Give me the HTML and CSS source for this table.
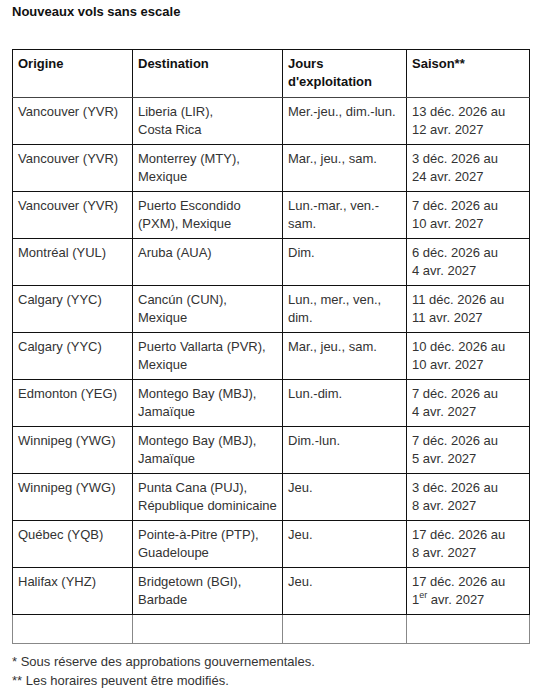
FILE: index.html
```html
<!DOCTYPE html>
<html lang="fr">
<head>
<meta charset="utf-8">
<title>Nouveaux vols sans escale</title>
<link rel="stylesheet" href="styles.css">
</head>
<body>
<h2 class="title">Nouveaux vols sans escale</h2>
<table class="flights">
  <colgroup>
    <col class="c1"><col class="c2"><col class="c3"><col class="c4">
  </colgroup>
  <thead>
    <tr><th>Origine</th><th>Destination</th><th>Jours d'exploitation</th><th>Saison**</th></tr>
  </thead>
  <tbody>
    <tr><td>Vancouver (YVR)</td><td>Liberia (LIR),<br>Costa Rica</td><td>Mer.-jeu., dim.-lun.</td><td>13 déc. 2026 au<br>12 avr. 2027</td></tr>
    <tr><td>Vancouver (YVR)</td><td>Monterrey (MTY),<br>Mexique</td><td>Mar., jeu., sam.</td><td>3 déc. 2026 au<br>24 avr. 2027</td></tr>
    <tr><td>Vancouver (YVR)</td><td>Puerto Escondido (PXM), Mexique</td><td>Lun.-mar., ven.-sam.</td><td>7 déc. 2026 au<br>10 avr. 2027</td></tr>
    <tr><td>Montréal (YUL)</td><td>Aruba (AUA)</td><td>Dim.</td><td>6 déc. 2026 au<br>4 avr. 2027</td></tr>
    <tr><td>Calgary (YYC)</td><td>Cancún (CUN),<br>Mexique</td><td>Lun., mer., ven., dim.</td><td>11 déc. 2026 au<br>11 avr. 2027</td></tr>
    <tr><td>Calgary (YYC)</td><td>Puerto Vallarta (PVR), Mexique</td><td>Mar., jeu., sam.</td><td>10 déc. 2026 au<br>10 avr. 2027</td></tr>
    <tr><td>Edmonton (YEG)</td><td>Montego Bay (MBJ), Jamaïque</td><td>Lun.-dim.</td><td>7 déc. 2026 au<br>4 avr. 2027</td></tr>
    <tr><td>Winnipeg (YWG)</td><td>Montego Bay (MBJ), Jamaïque</td><td>Dim.-lun.</td><td>7 déc. 2026 au<br>5 avr. 2027</td></tr>
    <tr><td>Winnipeg (YWG)</td><td>Punta Cana (PUJ), République dominicaine</td><td>Jeu.</td><td>3 déc. 2026 au<br>8 avr. 2027</td></tr>
    <tr><td>Québec (YQB)</td><td>Pointe-à-Pitre (PTP), Guadeloupe</td><td>Jeu.</td><td>17 déc. 2026 au<br>8 avr. 2027</td></tr>
    <tr><td>Halifax (YHZ)</td><td>Bridgetown (BGI),<br>Barbade</td><td>Jeu.</td><td>17 déc. 2026 au<br>1<sup>er</sup> avr. 2027</td></tr>
    <tr class="empty"><td>&nbsp;</td><td>&nbsp;</td><td>&nbsp;</td><td>&nbsp;</td></tr>
  </tbody>
</table>
<div class="notes">
  <p>* Sous réserve des approbations gouvernementales.</p>
  <p>** Les horaires peuvent être modifiés.</p>
</div>
</body>
</html>
```

FILE: styles.css
```css
html, body {
  margin: 0;
  padding: 0;
  background: #fff;
}
body {
  padding: 3px 12px 0 12px;
  font-family: "Liberation Sans", Arial, sans-serif;
  font-size: 13px;
  line-height: 18px;
  color: #333;
}
.title {
  margin: 0 0 28px 0;
  font-size: 13px;
  line-height: 18px;
  font-weight: bold;
  color: #111;
}
.flights {
  border-collapse: collapse;
  table-layout: fixed;
  width: 517px;
}
.c1 { width: 120px; }
.c2 { width: 150px; }
.c3 { width: 124px; }
.c4 { width: 123px; }
.flights th,
.flights td {
  border: 1px solid #111;
  padding: 5px 5px 5px 5px;
  text-align: left;
  vertical-align: top;
  font-size: 13px;
  line-height: 18px;
}
.flights th {
  font-weight: bold;
  color: #111;
  padding-bottom: 6px;
}
.flights thead tr th {
  border-bottom: 1px solid #444;
}
.flights tr.empty td {
  border-color: #888;
  border-top-color: #111;
}
.flights sup {
  font-size: 9px;
  line-height: 0;
  vertical-align: 6px;
}
.notes {
  margin-top: 8px;
}
.notes p {
  margin: 0;
  line-height: 19px;
}
```
